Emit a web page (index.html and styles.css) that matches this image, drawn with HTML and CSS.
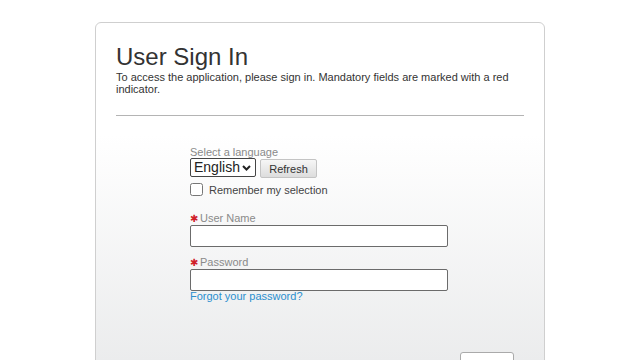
FILE: index.html
```html
<!DOCTYPE html>
<html lang="en">
<head>
  <meta charset="UTF-8">
  <title>User Sign In</title>
  <link rel="stylesheet" href="styles.css">
</head>
<body>

  <div class="signin-card">
    <h1>User Sign In</h1>
    <p class="intro">To access the application, please sign in. Mandatory fields are marked with a red indicator.</p>
    <hr>

    <form class="signin-form">
      <label class="field-label" for="language">Select a language</label>
      <div class="lang-row">
        <span class="select-wrap">
          <select id="language" class="lang-select">
            <option>English</option>
          </select>
          <svg class="chevron" width="9" height="6" viewBox="0 0 9 6"><path d="M1 1 L4.5 4.5 L8 1" fill="none" stroke="#222" stroke-width="2"/></svg>
        </span>
        <button type="button" class="small-btn">Refresh</button>
      </div>

      <div class="check-row">
        <input type="checkbox" id="remember">
        <label for="remember">Remember my selection</label>
      </div>

      <label class="field-label required" for="username"><span class="star">&#10033;</span>User Name</label>
      <input type="text" id="username" class="text-input">

      <label class="field-label required pass-label" for="password"><span class="star">&#10033;</span>Password</label>
      <input type="password" id="password" class="text-input">
      <a href="#" class="forgot">Forgot your password?</a>

      <div class="actions">
        <button type="submit" class="signin-btn">Sign In</button>
      </div>
    </form>
  </div>

</body>
</html>
```

FILE: styles.css
```css
body {
  margin: 0;
  padding-top: 22px;
  background: #ffffff;
  font-family: 'Liberation Sans', Arial, sans-serif;
  color: #333333;
}

.signin-card {
  width: 408px;
  margin: 0 auto;
  padding: 20px 20px 20px;
  border: 1px solid #cfcfcf;
  border-radius: 6px;
  background: linear-gradient(#ffffff 30%, #e8e9ea 100%);
}

.signin-card h1 {
  margin: 0;
  font-size: 24px;
  font-weight: normal;
  line-height: 28px;
  color: #333333;
}

.intro {
  margin: 0;
  font-size: 11px;
  line-height: 12px;
  color: #333333;
}

hr {
  margin: 20px 0 0;
  border: none;
  border-top: 1px solid #b4b4b4;
}

.signin-form {
  display: flex;
  flex-direction: column;
  align-items: flex-start;
  padding: 30px 0 0 74px;
}

.field-label {
  display: block;
  font-size: 11px;
  line-height: 12px;
  color: #8a8a8a;
}

.required {
  margin-top: 16px;
}

.pass-label {
  margin-top: 9px;
}

.star {
  display: inline-block;
  width: 10px;
  font-family: 'DejaVu Sans', sans-serif;
  font-size: 10px;
  line-height: 10px;
  color: #d0202a;
}

.lang-row {
  display: flex;
  align-items: flex-start;
  gap: 4px;
}

.select-wrap {
  position: relative;
  display: block;
}

.lang-select {
  display: block;
  width: 66px;
  height: 19px;
  margin: 0;
  padding: 0 0 0 3px;
  appearance: none;
  font-family: 'Liberation Sans', Arial, sans-serif;
  font-size: 14px;
  line-height: 17px;
  color: #222222;
  border: 1px solid #444444;
  border-radius: 2px;
  background: #ffffff;
}

.chevron {
  position: absolute;
  top: 7px;
  right: 5px;
  pointer-events: none;
}

.small-btn {
  margin-top: 1px;
  height: 19px;
  width: 57px;
  padding: 0;
  font-family: 'Liberation Sans', Arial, sans-serif;
  font-size: 11px;
  color: #333333;
  border: 1px solid #c4c4c4;
  border-radius: 2px;
  background: linear-gradient(#f6f6f6, #dddddd);
}

.check-row {
  display: flex;
  align-items: center;
  gap: 6px;
  margin-top: 5px;
  font-size: 11px;
  line-height: 12px;
  color: #444444;
}

.check-row input {
  width: 13px;
  height: 13px;
  margin: 0;
}

.text-input {
  box-sizing: border-box;
  width: 258px;
  height: 22px;
  margin: 1px 0 0;
  border: 1px solid #6b6b6b;
  border-radius: 2px;
  background: #ffffff;
}

.forgot {
  font-size: 11px;
  line-height: 12px;
  margin-top: -1px;
  color: #2a8fcf;
  text-decoration: none;
}

.actions {
  display: flex;
  justify-content: flex-end;
  width: 324px;
  margin-top: 50px;
}

.signin-btn {
  width: 54px;
  height: 24px;
  font-family: 'Liberation Sans', Arial, sans-serif;
  font-size: 11px;
  border: 1px solid #aaaaaa;
  border-radius: 3px;
  background: #ffffff;
}
```
